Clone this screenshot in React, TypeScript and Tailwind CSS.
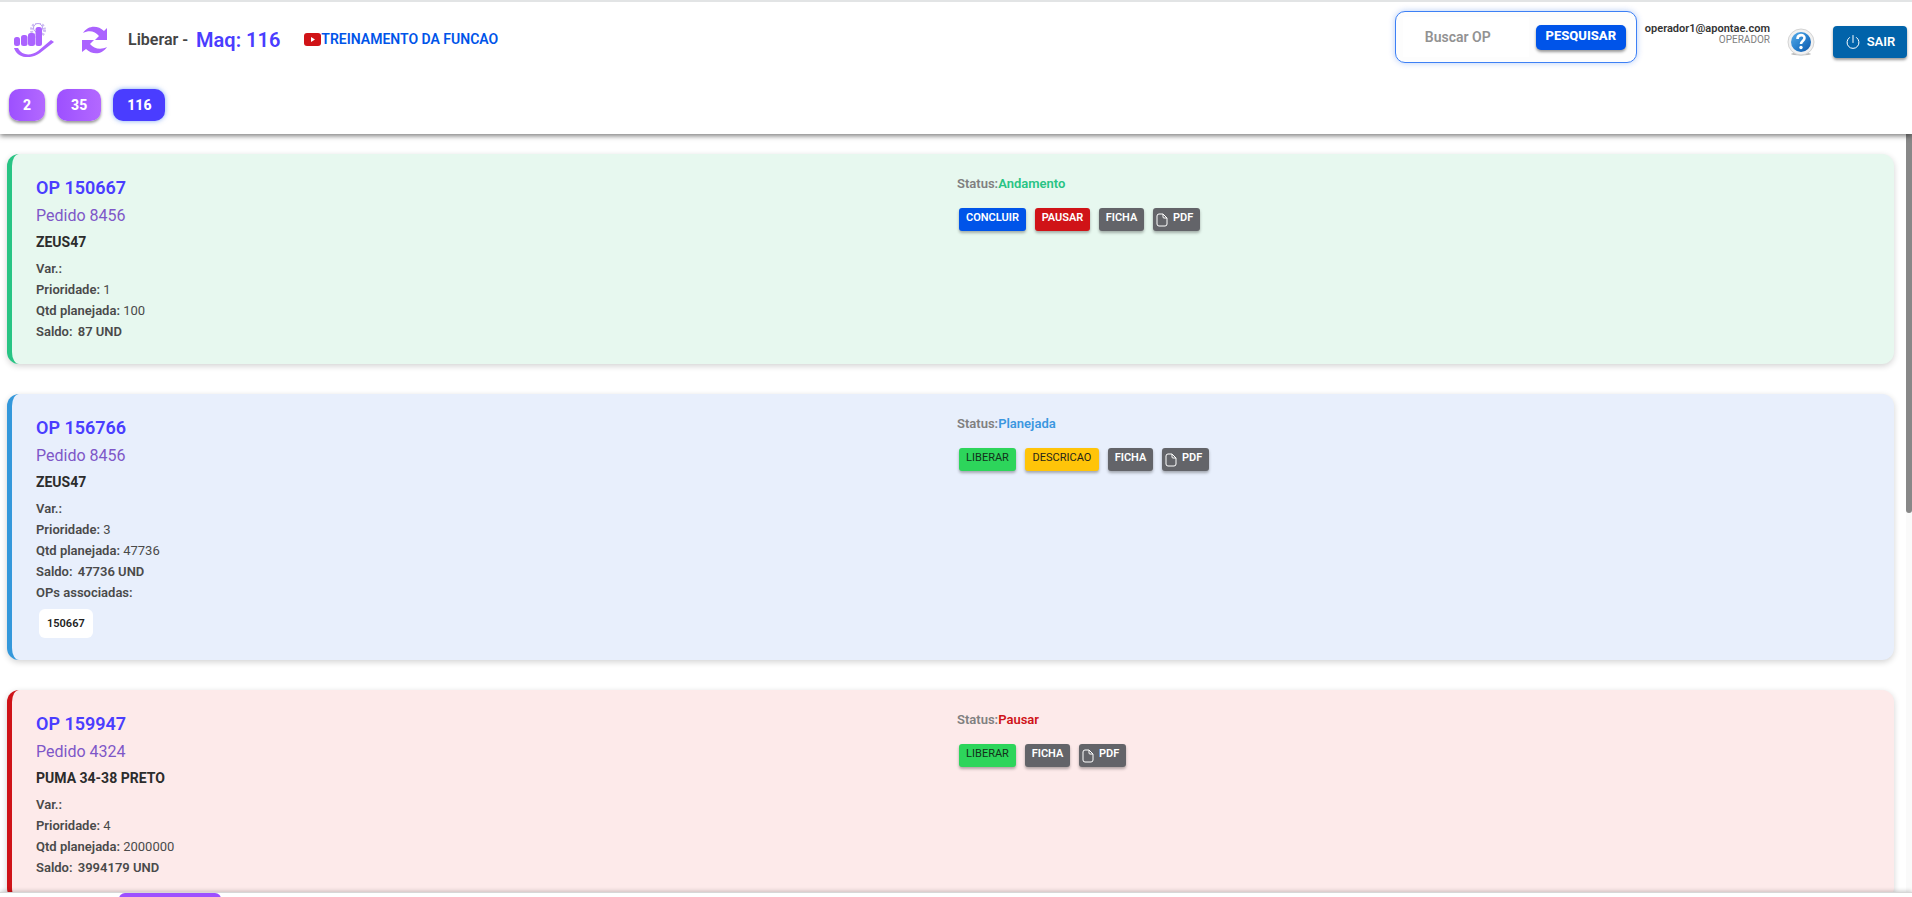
import React, {useState} from 'react';

interface Order {
    op: string;
    pedido: string;
    product: string;
    priority: number;
    planned: number;
    balance: string;
    status: keyof typeof statusStyles;
    actions: (keyof typeof actionStyles)[];
    linked?: string[];
}

const statusStyles = {
    Andamento: {card: "border-[#28c484] bg-[#e7f8ef]", text: "text-[#28c484]"},
    Planejada: {card: "border-[#3498db] bg-[#e8effc]", text: "text-[#3b97e0]"},
    Pausar: {card: "border-[#cf1318] bg-[#fdeaea]", text: "text-[#cf1318]"},
};

const actionStyles = {
    Concluir: "min-w-[67px] bg-[#0054e9] font-semibold text-white",
    Pausar: "min-w-[55px] bg-[#d01317] font-semibold text-white",
    Liberar: "min-w-[57px] bg-[#2dd55b] font-normal text-[#12301a]",
    Descricao: "min-w-[74px] bg-[#ffc409] font-normal text-[#26241a]",
};

const orders: Order[] = [
    {
        op: "150667", pedido: "8456", product: "ZEUS47", priority: 1, planned: 100,
        balance: "87 UND", status: "Andamento", actions: ["Concluir", "Pausar"],
    },
    {
        op: "156766", pedido: "8456", product: "ZEUS47", priority: 3, planned: 47736,
        balance: "47736 UND", status: "Planejada", actions: ["Liberar", "Descricao"], linked: ["150667"],
    },
    {
        op: "159947", pedido: "4324", product: "PUMA 34-38 PRETO", priority: 4, planned: 2000000,
        balance: "3994179 UND", status: "Pausar", actions: ["Liberar"],
    },
];

const machines = ["2", "35", "116"];

function Logo() {
    return (
        <svg viewBox="0 0 40 34" className="h-[34px] w-10" fill="#ab63ff">
            <circle cx="24" cy="7" r="6.5" fill="none" stroke="#cdbcf2" strokeWidth="3" strokeDasharray="2 1.4"/>
            <circle cx="24" cy="5" r="4.5" fill="#fff" stroke="#b9a2ee" strokeWidth="1"/>
            <rect x="0" y="14" width="6" height="9" rx="2.5"/>
            <rect x="7" y="12" width="6.5" height="11" rx="2.5"/>
            <rect x="14" y="10" width="7" height="13" rx="2.5"/>
            <rect x="21.500" y="4" width="6.5" height="19" rx="2.5"/>
            <path d="M0 25h4c4 8 13 8 20 3l13-11 3 2-14 11C16 37 3 35 0 25z"/>
        </svg>
    );
}

function RefreshIcon() {
    return (
        <svg viewBox="0 0 26 28" className="h-7 w-[26px]" fill="#ab63ff">
            <path d="M1 7C6-1 16-1 22 5l3-3v12H13l4-4C13 5 7 4 1 7z"/>
            <path d="M25 21c-5 8-15 8-21 2l-4 3V14h12l-4 4c4 5 11 6 17 3z"/>
        </svg>
    );
}

function HelpIcon() {
    return (
        <svg viewBox="0 0 28 28" className="size-7">
            <defs>
                <linearGradient id="help" x1="0" y1="0" x2="1" y2="1">
                    <stop offset="0" stopColor="#5aaeea"/>
                    <stop offset="0.5" stopColor="#2b83cf"/>
                    <stop offset="1" stopColor="#0d55a8"/>
                </linearGradient>
            </defs>
            <ellipse cx="14" cy="26" rx="10" ry="1.500" fill="#bbb"/>
            <circle cx="14" cy="14" r="13" fill="#f1f1f1" stroke="#d4d4d4"/>
            <circle cx="14" cy="14" r="10" fill="url(#help)"/>
            <path d="M10.500 11c0-5 7-5 7-1 0 3-3.500 3-3.500 6" fill="none" stroke="#fff" strokeWidth="2.600"/>
            <circle cx="14" cy="19.500" r="1.700" fill="#fff"/>
        </svg>
    );
}

function OrderCard({order}: { order: Order }) {
    const style = statusStyles[order.status];
    const button = "h-[23px] rounded-[3px] pb-0.5 text-[11px] uppercase shadow-[0_2px_3px_rgba(0,0,0,0.3)]";

    return (
        <article className={`grid shrink-0 grid-cols-2 rounded-xl border-l-[5px] pb-[22px] pl-6 pr-4 pt-[22px] shadow-[0_2px_6px_rgba(0,0,0,0.18)] ${style.card}`}>
            <div className="text-[13px] leading-[21px] text-[#4a4a4a]">
                <h2 className="text-lg font-semibold leading-6 text-[#4a3dff]">OP {order.op}</h2>
                <p className="mt-1 text-base leading-6 text-[#7e57c8]">Pedido {order.pedido}</p>
                <h3 className="mt-0.5 text-sm font-bold leading-6 text-[#2c2c2c]">{order.product}</h3>
                <p className="mt-1 font-semibold">Var.:</p>
                <p><span className="font-semibold">Prioridade:</span> {order.priority}</p>
                <p><span className="font-semibold">Qtd planejada:</span> {order.planned}</p>
                <p className="font-semibold">Saldo: <span className="ml-0.5">{order.balance}</span></p>
                {
                    order.linked &&
                    <>
                        <p className="font-semibold">OPs associadas:</p>
                        <ul className="ml-[3px] mt-1.5 flex gap-1">
                            {order.linked.map((op) => (
                                <li key={op} className="rounded-md bg-white px-2 py-1 text-[11px] font-semibold text-[#222]">{op}</li>
                            ))}
                        </ul>
                    </>
                }
            </div>
            <div>
                <p className="text-[13px] font-semibold leading-4 text-[#808080]">
                    Status:<span className={style.text}>{order.status}</span>
                </p>
                <div className="ml-0.5 mt-4 flex gap-[9px]">
                    {order.actions.map((action) => (
                        <button key={action} className={`${button} ${actionStyles[action]}`}>{action}</button>
                    ))}
                    <button className={`${button} min-w-[45px] bg-[#636469] font-semibold text-white`}>Ficha</button>
                    <button className={`${button} flex min-w-[47px] items-center gap-[5px] bg-[#636469] px-[3px] font-semibold text-white`}>
                        <svg viewBox="0 0 12 14" className="mt-0.5 h-3.5 w-3" fill="none" stroke="currentColor">
                            <path d="M3 1h4l4 4v6a2 2 0 0 1-2 2H3a2 2 0 0 1-2-2V3a2 2 0 0 1 2-2zM7 1v3a1 1 0 0 0 1 1h3"/>
                        </svg>
                        PDF
                    </button>
                </div>
            </div>
        </article>
    );
}

export default function App() {
    const [machine, setMachine] = useState("116");

    return (
        <div className="flex h-screen flex-col overflow-hidden bg-white font-[Roboto,sans-serif]">
            <header className="relative z-10 flex shrink-0 flex-col border-t-2 border-[#e2e4e5] bg-white pb-[13px] shadow-[0_2px_5px_rgba(0,0,0,0.5)]">
                <div className="flex h-[76px] items-center pl-3.5 pr-[5px]">
                    <Logo/>
                    <button aria-label="Atualizar" className="ml-7">
                        <RefreshIcon/>
                    </button>
                    <h1 className="ml-5 flex items-center gap-2 text-base font-semibold text-[#444]">
                        Liberar -
                        <span className="text-xl font-semibold text-[#4a3dff]">Maq: {machine}</span>
                    </h1>
                    <a href="#treinamento" className="mb-0.5 ml-6 flex items-center text-sm font-semibold text-[#0054e9]">
                        <svg viewBox="0 0 17 13" className="h-[13px] w-[17px]">
                            <rect width="17" height="13" rx="3" fill="#d01317"/>
                            <path d="M7 4v5l4-2.500z" fill="#fff"/>
                        </svg>
                        TREINAMENTO DA FUNCAO
                    </a>
                    <form
                        onSubmit={(e) => e.preventDefault()}
                        className="mb-1.5 ml-auto flex h-[52px] items-center gap-[7px] rounded-[10px] border border-[#3d80f5] bg-[#fdfdfd] pl-[7px] pr-2.5 shadow-[0_0_6px_rgba(0,84,233,0.3)]"
                    >
                        <input
                            aria-label="Buscar OP"
                            placeholder="Buscar OP"
                            className="h-10 w-[126px] bg-white pl-[22px] text-sm font-semibold outline-none placeholder:text-[#929292]"
                        />
                        <button className="h-[25px] w-[90px] rounded-[5px] bg-[#0054e9] pb-0.5 text-[13px] font-extrabold text-white shadow-[0_2px_3px_rgba(0,0,0,0.4)]">
                            PESQUISAR
                        </button>
                    </form>
                    <div className="mb-3 ml-2 text-right">
                        <p className="text-[11px] font-semibold leading-3 text-[#333]">operador1@apontae.com</p>
                        <p className="text-[10px] leading-[10px] text-[#808080]">OPERADOR</p>
                    </div>
                    <button aria-label="Ajuda" className="ml-[17px] mt-1">
                        <HelpIcon/>
                    </button>
                    <button className="ml-[18px] mt-1 flex h-8 w-[74px] items-center justify-center gap-1.5 rounded bg-[#0163aa] text-[13px] font-semibold text-white shadow-[0_2px_3px_rgba(0,0,0,0.4)]">
                        <svg viewBox="0 0 16 16" className="size-4" fill="none" stroke="currentColor" strokeLinecap="round">
                            <path d="M4.500 3.500a6 6 0 1 0 7 0M8 1.500v7"/>
                        </svg>
                        SAIR
                    </button>
                </div>
                <nav className="mt-[11px] flex items-center gap-3 px-[9px]">
                    {machines.map((name) => (
                        <button
                            key={name}
                            onClick={() => setMachine(name)}
                            className={`h-8 rounded-[10px] px-3.5 text-sm font-extrabold text-white ${
                                name === machine
                                    ? "bg-[#4a3dff] shadow-[0_0_5px_rgba(0,84,233,0.5)]"
                                    : "bg-linear-to-r from-[#9d50ff] to-[#b368ff] shadow-[0_2px_3px_rgba(0,0,0,0.4)]"
                            }`}
                        >
                            {name}
                        </button>
                    ))}
                </nav>
            </header>
            <main className="flex min-h-0 flex-1 overflow-hidden">
                <div className="flex flex-1 flex-col gap-[30px] pl-[7px] pr-3 pt-5">
                    {orders.map((order) => (
                        <OrderCard key={order.op} order={order}/>
                    ))}
                </div>
                <div className="w-1.5 bg-[#fafafa]">
                    <div className="h-1/2 rounded-b-sm bg-[#888]"/>
                </div>
            </main>
            <footer className="relative z-10 h-[5px] shrink-0 overflow-hidden border-t border-[#d7d7d7] bg-white shadow-[0_-1px_4px_rgba(0,0,0,0.2)]">
                <div className="ml-[119px] h-8 w-[102px] rounded-md bg-[#9d50ff]"/>
            </footer>
        </div>
    );
}
